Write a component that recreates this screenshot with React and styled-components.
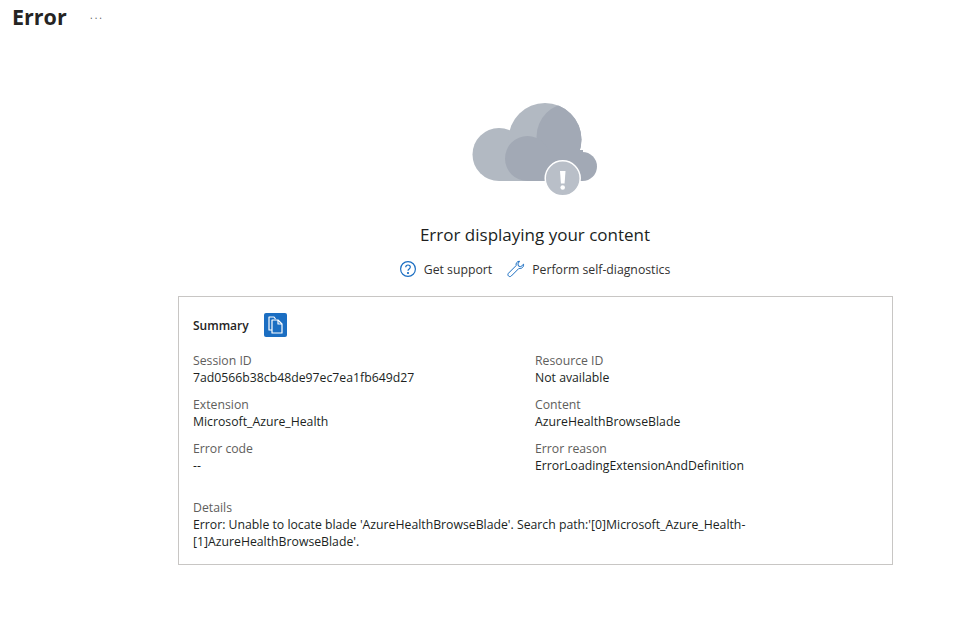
import React from 'react';
import styled, {createGlobalStyle} from 'styled-components';

const GlobalStyle = createGlobalStyle`
    html, body {
        margin: 0;
        padding: 0;
        background: #fff;
        font-family: "Open Sans", "Noto Sans", sans-serif;
        color: #201f1e;
    }
`;

const Page = styled.div`
    width: 954px;
    height: 632px;
    overflow: hidden;
`;

const Header = styled.header`
    display: flex;
    align-items: center;
    height: 33px;
    padding-left: 12px;
    margin-bottom: 1px;
`;

const Title = styled.h1`
    margin: 0;
    width: 78px;
    font-size: 21.5px;
    font-weight: 700;
    line-height: 33px;
    color: #252423;
`;

const Dots = styled.span`
    font-size: 10px;
    line-height: 10px;
    letter-spacing: 2px;
    color: #605e5c;
    margin-top: -4px;
`;

const Hero = styled.div`
    display: flex;
    flex-direction: column;
    align-items: center;
    width: 714px;
    margin-left: 178px;
    padding-top: 66px;
`;

const Heading = styled.h2`
    margin: 23px 0 0;
    font-size: 17px;
    font-weight: 400;
    line-height: 24px;
`;

const Links = styled.div`
    display: flex;
    align-items: center;
    gap: 15px;
    margin-top: 12px;
    margin-right: 1px;
    height: 20px;
`;

const SupportLink = styled.a`
    display: flex;
    align-items: center;
    gap: 7px;
    font-size: 12.25px;
    color: #323130;
`;

const Card = styled.section`
    box-sizing: border-box;
    width: 715px;
    height: 269px;
    margin: 17px 0 0 178px;
    padding: 15px 14px;
    border: 1px solid #c8c6c4;
`;

const SummaryRow = styled.div`
    display: flex;
    align-items: center;
    gap: 15px;
    height: 25px;
`;

const SummaryLabel = styled.span`
    padding-top: 2px;
    font-size: 12px;
    font-weight: 600;
    color: #252423;
`;

const CopyButton = styled.button`
    display: flex;
    align-items: center;
    justify-content: center;
    width: 23px;
    height: 24px;
    padding: 0;
    border: none;
    border-radius: 2px;
    background: #1b6ec2;
`;

const Grid = styled.div`
    display: grid;
    grid-template-columns: 342px 1fr;
    row-gap: 10px;
    margin-top: 15px;
`;

const Field = styled.div`
    font-size: 12.25px;
    line-height: 17px;
`;

const Label = styled.div`
    color: #605e5c;
`;

const Value = styled.div`
    color: #201f1e;
`;

const Details = styled(Field)`
    margin-top: 25px;
    width: 600px;
`;

const fields = [
    ['Session ID', '7ad0566b38cb48de97ec7ea1fb649d27'],
    ['Resource ID', 'Not available'],
    ['Extension', 'Microsoft_Azure_Health'],
    ['Content', 'AzureHealthBrowseBlade'],
    ['Error code', '--'],
    ['Error reason', 'ErrorLoadingExtensionAndDefinition']
];

const CloudIcon = () => (
    <svg width="130" height="100" viewBox="0 0 130 100">
        <defs>
            <clipPath id="big">
                <circle cx="75" cy="39.500" r="36.500" />
            </clipPath>
        </defs>
        <circle cx="29" cy="54.500" r="26.500" fill="#b2b9c2" />
        <circle cx="75" cy="39.500" r="36.500" fill="#b2b9c2" />
        <rect x="29" y="50" width="50" height="31" fill="#b2b9c2" />
        <circle cx="112.500" cy="66.500" r="14.500" fill="#a2a9b5" />
        <circle cx="100" cy="36.700" r="33.500" fill="#a2a9b5" clipPath="url(#big)" />
        <circle cx="57.500" cy="58.500" r="22.500" fill="#a2a9b5" />
        <rect x="57" y="50" width="56" height="31" fill="#a2a9b5" />
        <circle cx="92.700" cy="78.300" r="17.500" fill="#b9bfc8" stroke="#fff" strokeWidth="1.500" />
        <path fill="#fff" d="M90 71h5.500l-.9 12.500h-3.700z" />
        <circle cx="92.700" cy="87.500" r="2.300" fill="#fff" />
    </svg>
);

const HelpIcon = () => (
    <svg width="18" height="18" viewBox="0 0 18 18" fill="none" stroke="#1b6ec2" strokeWidth="1.200">
        <circle cx="9" cy="9" r="7.400" />
        <path d="M6.700 7.200C6.800 5.800 7.800 5 9 5c1.300 0 2.300.9 2.300 2.100 0 1.900-2.300 1.800-2.300 3.700" />
        <circle cx="9" cy="13" r=".5" fill="#1b6ec2" />
    </svg>
);

const WrenchIcon = () => (
    <svg width="18" height="18" viewBox="0 0 18 18" fill="none" stroke="#1b6ec2" strokeWidth="1" strokeLinejoin="round">
        <path d="M12.500 1.200c-2.300 0-3.900 2-3.400 4.400L1.500 13.200c-.8.800-.8 2 0 2.800.8.800 2 .8 2.800 0l7.600-7.600c2.600.7 5-1.300 4.700-4.200l-2.800 2.500-2.300-.6-.6-2.200z" />
    </svg>
);

const CopyIcon = () => (
    <svg width="15" height="18" viewBox="0 0 15 18" fill="none" stroke="#fff" strokeWidth="1.200" strokeLinejoin="round">
        <path d="M4 14H1V1h5l1.500 2" />
        <path d="M4 4h6l4 4v9H4z" />
        <path d="M10 4v4h4" />
    </svg>
);

const App = () => {
    return (
        <Page>
            <GlobalStyle />
            <Header>
                <Title>Error</Title>
                <Dots>...</Dots>
            </Header>
            <Hero>
                <CloudIcon />
                <Heading>Error displaying your content</Heading>
                <Links>
                    <SupportLink><HelpIcon />Get support</SupportLink>
                    <SupportLink><WrenchIcon />Perform self-diagnostics</SupportLink>
                </Links>
            </Hero>
            <Card>
                <SummaryRow>
                    <SummaryLabel>Summary</SummaryLabel>
                    <CopyButton aria-label='Copy'><CopyIcon /></CopyButton>
                </SummaryRow>
                <Grid>
                    {fields.map(([label, value]) => (
                        <Field key={label}>
                            <Label>{label}</Label>
                            <Value>{value}</Value>
                        </Field>
                    ))}
                </Grid>
                <Details>
                    <Label>Details</Label>
                    <Value>Error: Unable to locate blade 'AzureHealthBrowseBlade'. Search path:'[0]Microsoft_Azure_Health-[1]AzureHealthBrowseBlade'.</Value>
                </Details>
            </Card>
        </Page>
    );
};

export default App;
